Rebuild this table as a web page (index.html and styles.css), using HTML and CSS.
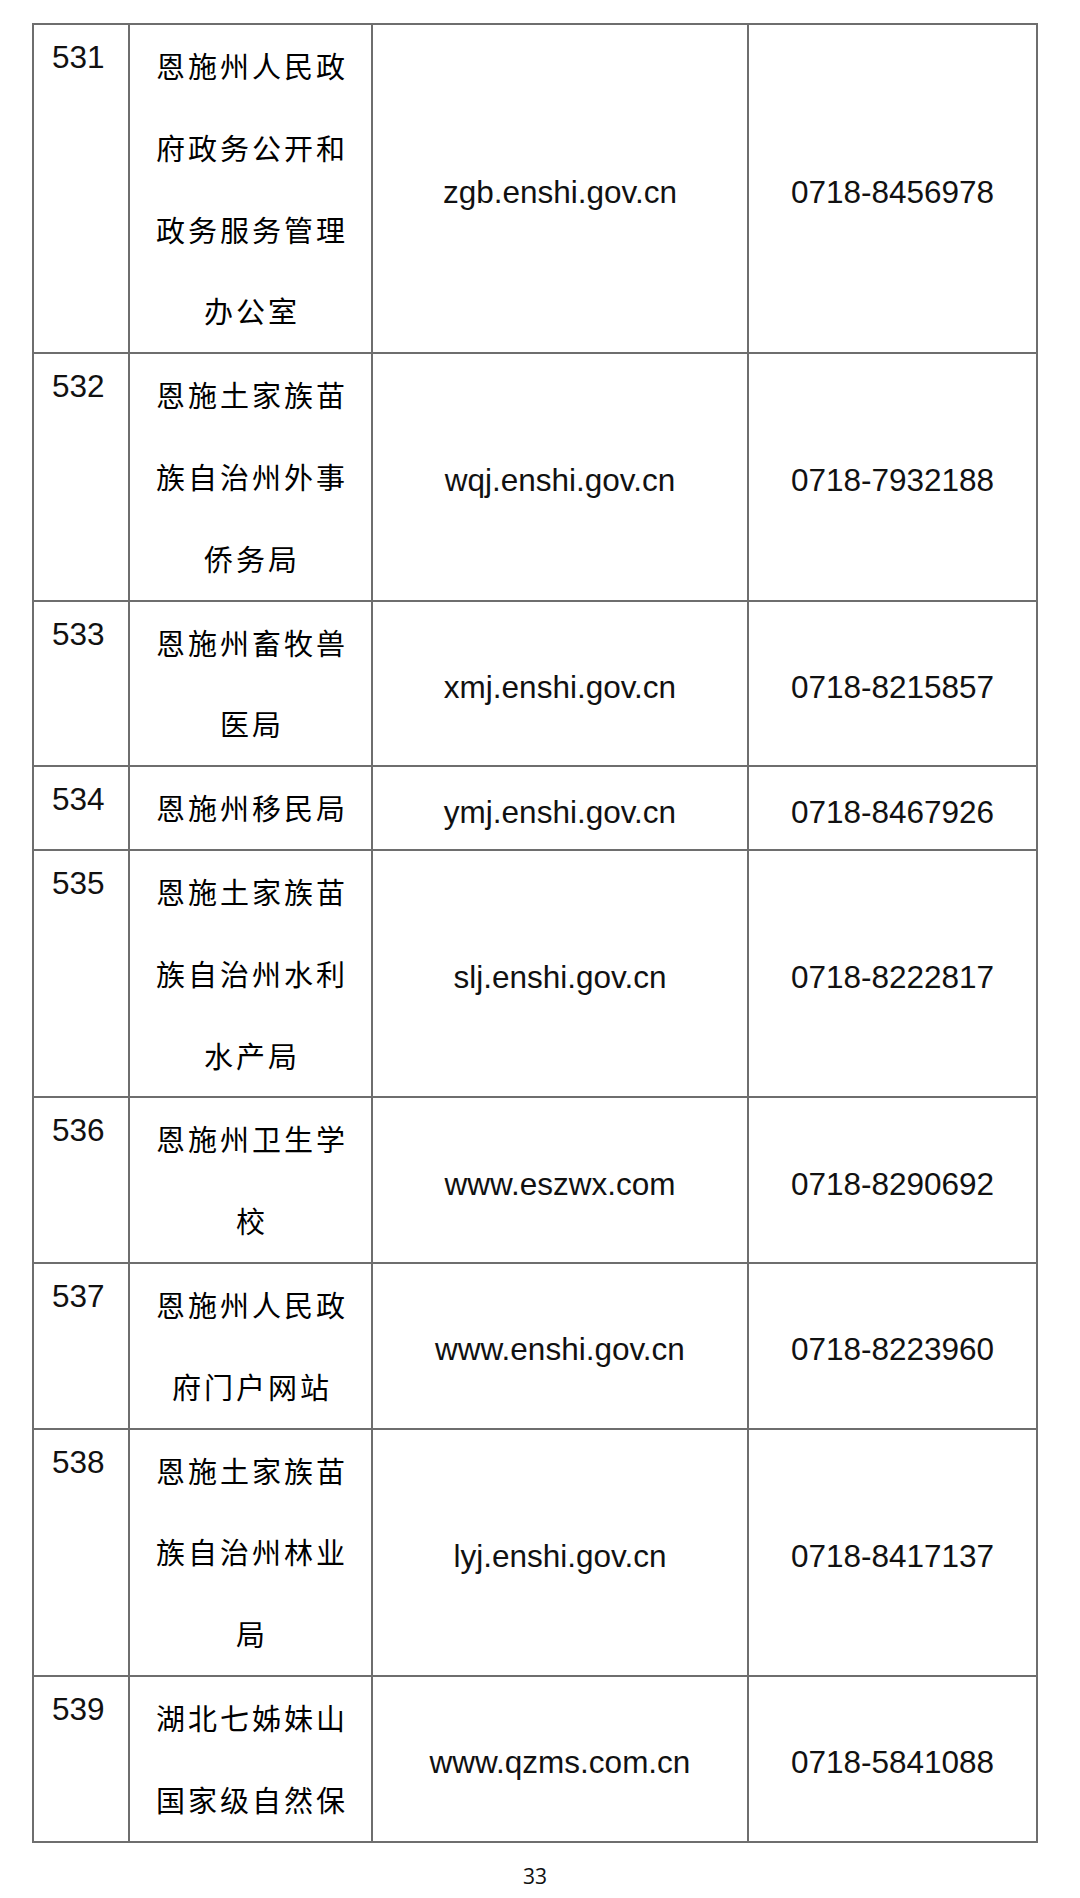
FILE: index.html
```html
<!DOCTYPE html>
<html lang="zh-CN">
<head>
<meta charset="utf-8">
<title>33</title>
<link rel="stylesheet" href="styles.css">
</head>
<body>
<div class="page">
  <table class="list">
    <colgroup>
      <col class="c-no">
      <col class="c-name">
      <col class="c-url">
      <col class="c-tel">
    </colgroup>
    <tbody>
      <tr>
        <td class="no">531</td>
        <td class="name">恩施州人民政<br>府政务公开和<br>政务服务管理<br>办公室</td>
        <td class="url">zgb.enshi.gov.cn</td>
        <td class="tel">0718-8456978</td>
      </tr>
      <tr>
        <td class="no">532</td>
        <td class="name">恩施土家族苗<br>族自治州外事<br>侨务局</td>
        <td class="url">wqj.enshi.gov.cn</td>
        <td class="tel">0718-7932188</td>
      </tr>
      <tr>
        <td class="no">533</td>
        <td class="name">恩施州畜牧兽<br>医局</td>
        <td class="url">xmj.enshi.gov.cn</td>
        <td class="tel">0718-8215857</td>
      </tr>
      <tr>
        <td class="no">534</td>
        <td class="name">恩施州移民局</td>
        <td class="url">ymj.enshi.gov.cn</td>
        <td class="tel">0718-8467926</td>
      </tr>
      <tr>
        <td class="no">535</td>
        <td class="name">恩施土家族苗<br>族自治州水利<br>水产局</td>
        <td class="url">slj.enshi.gov.cn</td>
        <td class="tel">0718-8222817</td>
      </tr>
      <tr>
        <td class="no">536</td>
        <td class="name">恩施州卫生学<br>校</td>
        <td class="url">www.eszwx.com</td>
        <td class="tel">0718-8290692</td>
      </tr>
      <tr>
        <td class="no">537</td>
        <td class="name">恩施州人民政<br>府门户网站</td>
        <td class="url">www.enshi.gov.cn</td>
        <td class="tel">0718-8223960</td>
      </tr>
      <tr>
        <td class="no">538</td>
        <td class="name">恩施土家族苗<br>族自治州林业<br>局</td>
        <td class="url">lyj.enshi.gov.cn</td>
        <td class="tel">0718-8417137</td>
      </tr>
      <tr>
        <td class="no">539</td>
        <td class="name">湖北七姊妹山<br>国家级自然保</td>
        <td class="url">www.qzms.com.cn</td>
        <td class="tel">0718-5841088</td>
      </tr>
    </tbody>
  </table>
  <div class="pageno">33</div>
</div>
</body>
</html>
```
FILE: styles.css
```css
html, body {
  margin: 0;
  padding: 0;
  background: #ffffff;
}

.page {
  width: 1080px;
  height: 1898px;
  padding-top: 23px;
  box-sizing: border-box;
  overflow: hidden;
}

.list {
  margin-left: 32px;
  width: 1006px;
  border-collapse: collapse;
  table-layout: fixed;
  color: #111111;
}

.c-no { width: 96px; }
.c-name { width: 243px; }
.c-url { width: 376px; }
.c-tel { width: 289px; }

.list td {
  border: 2px solid #6e6e6e;
  padding: 0;
}

.no {
  vertical-align: top;
  font-family: "Liberation Sans", Arial, sans-serif;
  font-size: 31.5px;
  line-height: 36px;
  padding: 14px 0 0 18px !important;
  text-align: left;
}

.name {
  vertical-align: top;
  text-align: center;
  font-family: "Noto Sans CJK SC", "Noto Sans", sans-serif;
  font-size: 29px;
  line-height: 81.8px;
  letter-spacing: 3px;
  padding-left: 3px !important;
  color: #000000;
}

.url,
.tel {
  vertical-align: middle;
  text-align: center;
  font-family: "Liberation Sans", Arial, sans-serif;
  font-size: 31.5px;
  padding-top: 8px !important;
}

.pageno {
  margin-top: 19px;
  margin-left: 32px;
  width: 1006px;
  text-align: center;
  font-family: "Open Sans", "Liberation Sans", sans-serif;
  font-size: 21px;
  line-height: 28px;
  color: #111111;
}
```
